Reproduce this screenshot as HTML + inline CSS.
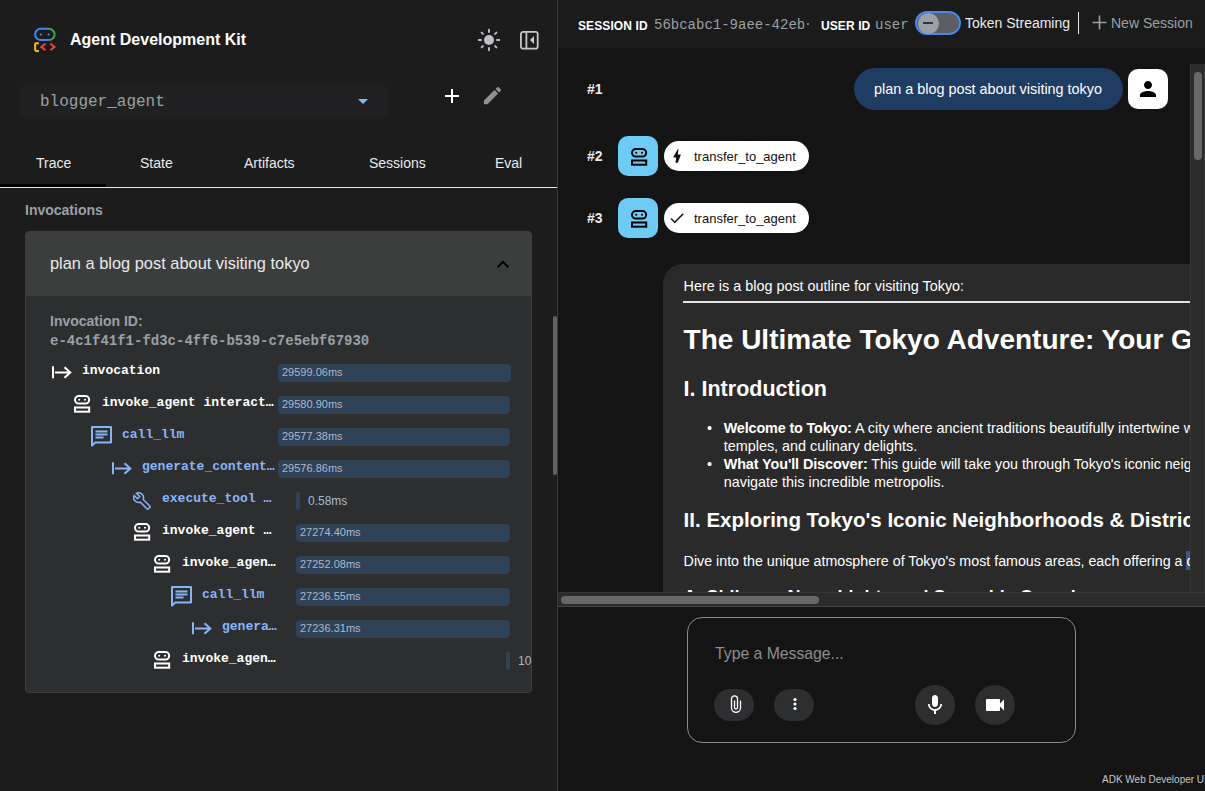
<!DOCTYPE html>
<html><head><meta charset="utf-8">
<style>
*{box-sizing:border-box;margin:0;padding:0}
html,body{width:1205px;height:791px;overflow:hidden;background:#141414;font-family:"Liberation Sans",sans-serif;color:#e8eaed}
.a{position:absolute}
.mono{font-family:"Liberation Mono",monospace}
#left{position:absolute;left:0;top:0;width:557px;height:791px;background:#1c1c1c}
#divider{position:absolute;left:557px;top:0;width:1px;height:791px;background:#3a3a3a}
#rhead{position:absolute;left:558px;top:0;width:647px;height:48px;background:#1b1b1b}
.tab{position:absolute;top:155px;font-size:14px;color:#e8eaed;white-space:nowrap}
.row{position:absolute;height:18px;white-space:nowrap}
.nm{position:absolute;font-family:"Liberation Mono",monospace;font-weight:bold;font-size:13px;white-space:nowrap;overflow:hidden;text-overflow:ellipsis}
.w{color:#ffffff}
.b{color:#8ab4f8}
.bar{position:absolute;height:18px;background:#304257;border-radius:4px;font-size:11px;color:#a9b9cc;line-height:17px;padding-left:4px;white-space:nowrap}
.ic{position:absolute}
</style></head><body>
<div id="left">
  <!-- logo -->
  <svg class="a" style="left:30px;top:24px" width="30" height="32" viewBox="0 0 30 32">
    <path d="M18 4.8 H19 A5.6 5.6 0 0 1 19 16 H18.6" fill="none" stroke="#34a853" stroke-width="2"/>
    <path d="M18.2 4.8 H10.7 A5.6 5.6 0 0 0 10.7 16 H18.8" fill="none" stroke="#4285f4" stroke-width="2"/>
    <circle cx="10.9" cy="10.6" r="1.1" fill="#4285f4"/>
    <circle cx="18.6" cy="10.6" r="1.1" fill="#4285f4"/>
    <path d="M8.9 19.2 H6.2 Q5.1 19.2 5.1 20.3 V25.8 Q5.1 26.9 6.2 26.9 H8.9" fill="none" stroke="#fbbc04" stroke-width="2"/>
    <path d="M15.4 19.6 L11.3 22.9 L15.4 26.2" fill="none" stroke="#ea4335" stroke-width="2"/>
    <path d="M20.4 19.6 L24.5 22.9 L20.4 26.2" fill="none" stroke="#ea4335" stroke-width="2"/>
  </svg>
  <div class="a" style="left:70px;top:31px;font-size:16px;font-weight:bold;color:#fff;white-space:nowrap">Agent Development Kit</div>
  <!-- sun -->
  <svg class="a" style="left:477.4px;top:28px" width="24" height="24" viewBox="0 0 24 24">
    <circle cx="12" cy="12" r="5" fill="#bdc1c6"/>
    <g stroke="#bdc1c6" stroke-width="1.9" stroke-linecap="round">
      <path d="M12 1.8v2.2M12 20v2.2M1.8 12h2.2M20 12h2.2M4.6 4.6l1.3 1.3M18.1 18.1l1.3 1.3M4.6 19.4l1.3-1.3M18.1 5.9l1.3-1.3"/>
    </g>
  </svg>
  <!-- panel icon -->
  <svg class="a" style="left:520px;top:31px" width="19" height="19" viewBox="0 0 19 19">
    <rect x="0.9" y="0.9" width="16.8" height="16.8" rx="2.2" fill="none" stroke="#c4c7c5" stroke-width="1.8"/>
    <path d="M6.4 1v16.6" stroke="#c4c7c5" stroke-width="1.8"/>
    <path d="M9.8 9 L14 5 V13 z" fill="#c4c7c5"/>
  </svg>
  <!-- agent select -->
  <div class="a" style="left:20px;top:84px;width:368px;height:35px;background:#202022;border-radius:8px"></div>
  <div class="a mono" style="left:40px;top:93px;font-size:16px;color:#9aa0a6;white-space:nowrap">blogger_agent</div>
  <svg class="a" style="left:357px;top:98px" width="12" height="8" viewBox="0 0 12 8"><path d="M1 1h10l-5 5z" fill="#8ab4f8"/></svg>
  <!-- plus -->
  <svg class="a" style="left:442px;top:86px" width="20" height="20" viewBox="0 0 20 20"><path d="M10 3v14M3 10h14" stroke="#fff" stroke-width="2"/></svg>
  <!-- pencil -->
  <svg class="a" style="left:480.5px;top:84px" width="23" height="23" viewBox="0 0 24 24"><path d="M3 17.25V21h3.75L17.81 9.94l-3.75-3.75L3 17.25zM20.71 7.04a1 1 0 0 0 0-1.41l-2.34-2.34a1 1 0 0 0-1.41 0l-1.83 1.83 3.75 3.75 1.83-1.83z" fill="#8f9193"/></svg>
  <!-- tabs -->
  <div class="tab" style="left:36px">Trace</div>
  <div class="tab" style="left:140px">State</div>
  <div class="tab" style="left:244px">Artifacts</div>
  <div class="tab" style="left:369px">Sessions</div>
  <div class="tab" style="left:495px">Eval</div>
  <div class="a" style="left:0;top:187px;width:557px;height:1px;background:#e8eaed"></div>
  <div class="a" style="left:0;top:184px;width:106px;height:3px;background:#000"></div>
  <div class="a" style="left:25px;top:202px;font-size:14px;font-weight:bold;color:#9aa0a6">Invocations</div>
  <!-- card -->
  <div class="a" style="left:25px;top:231px;width:507px;height:462px;background:#2d2e30;border:1px solid #3c3d3f;border-radius:4px;overflow:hidden">
    <div class="a" style="left:-1px;top:-1px;width:507px;height:65px;background:#3c3d3d"></div>
  </div>
  <div class="a" style="left:50px;top:254px;font-size:16.4px;color:#e8eaed;white-space:nowrap">plan a blog post about visiting tokyo</div>
  <svg class="a" style="left:495px;top:258px" width="16" height="12" viewBox="0 0 16 12"><path d="M2.6 9.2L8 3.8l5.4 5.4" fill="none" stroke="#000" stroke-width="2"/></svg>
  <div class="a" style="left:50px;top:313px;font-size:14px;font-weight:bold;color:#9aa0a6">Invocation ID:</div>
  <div class="a mono" style="left:50px;top:333px;font-size:14px;font-weight:bold;color:#9aa0a6;white-space:nowrap">e-4c1f41f1-fd3c-4ff6-b539-c7e5ebf67930</div>
  <!--ROWS-->
<svg class="ic" style="left:51px;top:366px" width="22" height="14" viewBox="0 0 22 14"><path d="M2 0.3v12" stroke="#ffffff" stroke-width="2"/><path d="M4 6.5h15.5M13.5 1.2l5.8 5.3-5.8 5.3" fill="none" stroke="#ffffff" stroke-width="2"/></svg>
<div class="nm" style="left:82px;top:360px;width:196px;line-height:22px;color:#ffffff">invocation</div>
<div class="bar" style="left:278px;top:364px;width:233px">29599.06ms</div>
<svg class="ic" style="left:74px;top:395px" width="17" height="18" viewBox="0 0 17 18"><rect x="1" y="1" width="14.2" height="7.6" rx="3.8" fill="none" stroke="#ffffff" stroke-width="2"/><circle cx="5.2" cy="4.8" r="1.05" fill="#ffffff"/><circle cx="11" cy="4.8" r="1.05" fill="#ffffff"/><rect x="1" y="12.5" width="14.2" height="4.2" fill="none" stroke="#ffffff" stroke-width="2"/></svg>
<div class="nm" style="left:102px;top:392px;width:176px;line-height:22px;color:#ffffff">invoke_agent interactive_blogger_agent</div>
<div class="bar" style="left:278px;top:396px;width:232px">29580.90ms</div>
<svg class="ic" style="left:91px;top:426px" width="21" height="21" viewBox="0 0 21 21"><path d="M1 19.5V1h19v15.5H4.2z" fill="none" stroke="#8ab4f8" stroke-width="2" stroke-linejoin="round"/><path d="M4.5 5.5h12M4.5 8.5h12M4.5 11.5h8" stroke="#8ab4f8" stroke-width="2"/></svg>
<div class="nm" style="left:122px;top:424px;width:156px;line-height:22px;color:#8ab4f8">call_llm</div>
<div class="bar" style="left:278px;top:428px;width:232px">29577.38ms</div>
<svg class="ic" style="left:111px;top:462px" width="22" height="14" viewBox="0 0 22 14"><path d="M2 0.3v12" stroke="#8ab4f8" stroke-width="2"/><path d="M4 6.5h15.5M13.5 1.2l5.8 5.3-5.8 5.3" fill="none" stroke="#8ab4f8" stroke-width="2"/></svg>
<div class="nm" style="left:142px;top:456px;width:136px;line-height:22px;color:#8ab4f8">generate_content gemini</div>
<div class="bar" style="left:278px;top:460px;width:232px">29576.86ms</div>
<svg class="ic" style="left:133px;top:491.5px" width="18" height="18" viewBox="0 0 24 24"><path d="M22.7 19l-9.1-9.1c.9-2.3.4-5-1.5-6.9-2-2-5-2.4-7.4-1.3L9 6 6 9 1.6 4.7C.4 7.1.9 10.1 2.9 12.1c1.9 1.9 4.6 2.4 6.9 1.5l9.1 9.1c.4.4 1 .4 1.4 0l2.300-2.300c.5-.4.5-1.100.1-1.400z" fill="none" stroke="#8ab4f8" stroke-width="2"/></svg>
<div class="nm" style="left:162px;top:488px;width:116px;line-height:22px;color:#8ab4f8">execute_tool transfer_to_agent</div>
<div class="bar" style="left:296px;top:492px;width:4px;padding:0"></div>
<div class="a" style="left:308px;top:492px;font-size:12px;line-height:18px;color:#a9b9cc;white-space:nowrap">0.58ms</div>
<svg class="ic" style="left:134px;top:523px" width="17" height="18" viewBox="0 0 17 18"><rect x="1" y="1" width="14.2" height="7.6" rx="3.8" fill="none" stroke="#ffffff" stroke-width="2"/><circle cx="5.2" cy="4.8" r="1.05" fill="#ffffff"/><circle cx="11" cy="4.8" r="1.05" fill="#ffffff"/><rect x="1" y="12.5" width="14.2" height="4.2" fill="none" stroke="#ffffff" stroke-width="2"/></svg>
<div class="nm" style="left:162px;top:520px;width:116px;line-height:22px;color:#ffffff">invoke_agent blogger</div>
<div class="bar" style="left:296px;top:524px;width:214px">27274.40ms</div>
<svg class="ic" style="left:154px;top:555px" width="17" height="18" viewBox="0 0 17 18"><rect x="1" y="1" width="14.2" height="7.6" rx="3.8" fill="none" stroke="#ffffff" stroke-width="2"/><circle cx="5.2" cy="4.8" r="1.05" fill="#ffffff"/><circle cx="11" cy="4.8" r="1.05" fill="#ffffff"/><rect x="1" y="12.5" width="14.2" height="4.2" fill="none" stroke="#ffffff" stroke-width="2"/></svg>
<div class="nm" style="left:182px;top:552px;width:96px;line-height:22px;color:#ffffff">invoke_agent planner</div>
<div class="bar" style="left:296px;top:556px;width:214px">27252.08ms</div>
<svg class="ic" style="left:171px;top:586px" width="21" height="21" viewBox="0 0 21 21"><path d="M1 19.5V1h19v15.5H4.2z" fill="none" stroke="#8ab4f8" stroke-width="2" stroke-linejoin="round"/><path d="M4.5 5.5h12M4.5 8.5h12M4.5 11.5h8" stroke="#8ab4f8" stroke-width="2"/></svg>
<div class="nm" style="left:202px;top:584px;width:76px;line-height:22px;color:#8ab4f8">call_llm</div>
<div class="bar" style="left:296px;top:588px;width:214px">27236.55ms</div>
<svg class="ic" style="left:191px;top:622px" width="22" height="14" viewBox="0 0 22 14"><path d="M2 0.3v12" stroke="#8ab4f8" stroke-width="2"/><path d="M4 6.5h15.5M13.5 1.2l5.8 5.3-5.8 5.3" fill="none" stroke="#8ab4f8" stroke-width="2"/></svg>
<div class="nm" style="left:222px;top:616px;width:56px;line-height:22px;color:#8ab4f8">generate_content gemini</div>
<div class="bar" style="left:296px;top:620px;width:214px">27236.31ms</div>
<svg class="ic" style="left:154px;top:651px" width="17" height="18" viewBox="0 0 17 18"><rect x="1" y="1" width="14.2" height="7.6" rx="3.8" fill="none" stroke="#ffffff" stroke-width="2"/><circle cx="5.2" cy="4.8" r="1.05" fill="#ffffff"/><circle cx="11" cy="4.8" r="1.05" fill="#ffffff"/><rect x="1" y="12.5" width="14.2" height="4.2" fill="none" stroke="#ffffff" stroke-width="2"/></svg>
<div class="nm" style="left:182px;top:648px;width:96px;line-height:22px;color:#ffffff">invoke_agent critic</div>
<div class="bar" style="left:506px;top:652px;width:4px;padding:0"></div>
<div class="a" style="left:518px;top:652px;font-size:12px;line-height:18px;color:#a9b9cc;white-space:nowrap">10</div>
<!--/ROWS-->
  <!-- scrollbar -->
  <div class="a" style="left:552.5px;top:316px;width:4.5px;height:159px;background:#5f6368;border-radius:2.5px"></div>
</div>
<div id="divider"></div>

<div id="rhead">
  <div class="a" style="left:20px;top:18.5px;font-size:12px;letter-spacing:0.1px;font-weight:bold;color:#fff;white-space:nowrap">SESSION ID</div>
  <div class="a mono" style="left:96px;top:17px;font-size:14px;color:#9aa0a6;white-space:nowrap">56bcabc1-9aee-42eb<span style="display:inline-block;width:2px;height:2px;border-radius:1px;background:#9aa0a6;position:relative;top:-4px;margin-left:2px"></span></div>
  <div class="a" style="left:263px;top:18.5px;font-size:12px;letter-spacing:0.1px;font-weight:bold;color:#fff;white-space:nowrap">USER ID</div>
  <div class="a mono" style="left:317px;top:16.5px;font-size:14px;color:#9aa0a6;white-space:nowrap">user</div>
  <div class="a" style="left:357px;top:11px;width:46px;height:24px;border:2px solid #4c84f2;border-radius:12px;background:#5b5e62"></div>
  <div class="a" style="left:359.5px;top:12.5px;width:21px;height:21px;border-radius:10.5px;background:#9aa0a6"></div>
  <div class="a" style="left:365px;top:22px;width:10px;height:2px;background:#333"></div>
  <div class="a" style="left:407px;top:15px;font-size:14px;color:#e8eaed;white-space:nowrap">Token Streaming</div>
  <div class="a" style="left:520px;top:12px;width:1.2px;height:22px;background:#e8eaed"></div>
  <svg class="a" style="left:534px;top:15px" width="15" height="15" viewBox="0 0 15 15"><path d="M7.5 0.5v14M0.5 7.5h14" stroke="#9aa0a6" stroke-width="1.6"/></svg>
  <div class="a" style="left:553px;top:15px;font-size:14px;color:#9aa0a6;white-space:nowrap">New Session</div>
</div>
<div id="chat" class="a" style="left:558px;top:48px;width:632px;height:544px;overflow:hidden;background:#141414">
  <div class="a" style="left:29px;top:33px;font-size:14px;font-weight:bold;color:#e8eaed">#1</div>
  <div class="a" style="left:296px;top:20px;width:269px;height:42px;border-radius:21px;background:#1f3d63"></div>
  <div class="a" style="left:316px;top:33px;font-size:14.4px;color:#fff;white-space:nowrap">plan a blog post about visiting tokyo</div>
  <div class="a" style="left:570px;top:21px;width:40px;height:40px;border-radius:10px;background:#fff"></div>
  <svg class="a" style="left:578px;top:29px" width="24" height="24" viewBox="0 0 24 24"><path d="M12 12c2.2 0 4-1.8 4-4s-1.8-4-4-4-4 1.8-4 4 1.8 4 4 4zm0 2c-2.7 0-8 1.3-8 4v2h16v-2c0-2.7-5.3-4-8-4z" fill="#000"/></svg>

  <div class="a" style="left:29px;top:100px;font-size:14px;font-weight:bold;color:#e8eaed">#2</div>
  <div class="a" style="left:60px;top:88px;width:40px;height:40px;border-radius:10px;background:#6ecbf5"></div><svg class="a" style="left:72.5px;top:100px" width="17" height="18" viewBox="0 0 17 18"><rect x="1" y="1" width="14.2" height="7.6" rx="3.8" fill="none" stroke="#000" stroke-width="2"/><circle cx="5.2" cy="4.8" r="1.05" fill="#000"/><circle cx="11" cy="4.8" r="1.05" fill="#000"/><rect x="1" y="12.5" width="14.2" height="4.2" fill="none" stroke="#000" stroke-width="2"/></svg>
  <div class="a" style="left:106px;top:93px;width:145px;height:30px;border-radius:15px;background:#fff"></div>
  <svg class="a" style="left:110px;top:99px" width="18" height="18" viewBox="0 0 24 24"><path d="M11 21h-1l1-7H7.5c-.6 0-.6-.3-.4-.6l.1-.1C8.5 11.1 10.4 7.8 13 3h1l-1 7h3.5c.5 0 .6.3.5.5L13 21z" fill="#111"/></svg>
  <div class="a" style="left:136px;top:101px;font-size:13px;color:#111;white-space:nowrap">transfer_to_agent</div>

  <div class="a" style="left:29px;top:162px;font-size:14px;font-weight:bold;color:#e8eaed">#3</div>
  <div class="a" style="left:60px;top:150px;width:40px;height:40px;border-radius:10px;background:#6ecbf5"></div><svg class="a" style="left:72.5px;top:162px" width="17" height="18" viewBox="0 0 17 18"><rect x="1" y="1" width="14.2" height="7.6" rx="3.8" fill="none" stroke="#000" stroke-width="2"/><circle cx="5.2" cy="4.8" r="1.05" fill="#000"/><circle cx="11" cy="4.8" r="1.05" fill="#000"/><rect x="1" y="12.5" width="14.2" height="4.2" fill="none" stroke="#000" stroke-width="2"/></svg>
  <div class="a" style="left:106px;top:155px;width:145px;height:30px;border-radius:15px;background:#fff"></div>
  <svg class="a" style="left:110px;top:161px" width="18" height="18" viewBox="0 0 24 24"><path d="M9 16.2L4.8 12l-1.4 1.4L9 19 21 7l-1.4-1.4L9 16.2z" fill="#111"/></svg>
  <div class="a" style="left:136px;top:163px;font-size:13px;color:#111;white-space:nowrap">transfer_to_agent</div>

  <div id="card" class="a" style="left:105px;top:216px;width:700px;height:400px;border-radius:20px;background:#2a2a2a;overflow:hidden">
    <div class="a" style="left:20.6px;top:15px;font-size:14.4px;line-height:1;color:#fff;white-space:nowrap">Here is a blog post outline for visiting Tokyo:</div>
    <div class="a" style="left:20px;top:37px;width:680px;height:2px;background:#e3e3e3"></div>
    <div class="a" style="left:20.6px;top:62px;font-size:28px;letter-spacing:0px;line-height:1;font-weight:bold;color:#fff;white-space:nowrap">The Ultimate Tokyo Adventure: Your Guide to the Capital</div>
    <div class="a" style="left:20.6px;top:114.8px;font-size:21.5px;line-height:1;font-weight:bold;color:#fff;white-space:nowrap">I. Introduction</div>
    <div class="a" style="left:44px;top:156.8px;font-size:14.4px;line-height:1;color:#fff;white-space:nowrap">&#8226;</div>
    <div class="a" style="left:60.7px;top:156.8px;font-size:14.4px;line-height:1;color:#fff;white-space:nowrap"><b style="letter-spacing:-0.15px">Welcome to Tokyo:</b> A city where ancient traditions beautifully intertwine with futuristic innovation.</div>
    <div class="a" style="left:60.7px;top:174.8px;font-size:14.4px;line-height:1;color:#fff;white-space:nowrap">temples, and culinary delights.</div>
    <div class="a" style="left:44px;top:192.8px;font-size:14.4px;line-height:1;color:#fff;white-space:nowrap">&#8226;</div>
    <div class="a" style="left:60.7px;top:192.8px;font-size:14.2px;line-height:1;color:#fff;white-space:nowrap"><b style="letter-spacing:-0.1px;font-size:14.4px">What You'll Discover:</b> This guide will take you through Tokyo's iconic neighborhoods,</div>
    <div class="a" style="left:60.7px;top:210.8px;font-size:14.4px;line-height:1;color:#fff;white-space:nowrap">navigate this incredible metropolis.</div>
    <div class="a" style="left:20.6px;top:246.2px;font-size:20.5px;line-height:1;font-weight:bold;color:#fff;white-space:nowrap">II. Exploring Tokyo's Iconic Neighborhoods &amp; Districts</div>
    <div class="a" style="left:522.8px;top:287px;width:10px;height:19px;background:#3c5a82"></div>
    <div class="a" style="left:20.6px;top:289.8px;font-size:14.25px;line-height:1;color:#fff;white-space:nowrap">Dive into the unique atmosphere of Tokyo's most famous areas, each offering a distinct vibe.</div>
    <div class="a" style="left:20.6px;top:324px;font-size:18px;line-height:1;font-weight:bold;color:#fff;white-space:nowrap">A. Shibuya: Neon Lights and Scramble Crossings</div>
  </div>
</div>


<!-- chat scrollbars -->
<div class="a" style="left:1190px;top:64px;width:15px;height:543px;background:#2b2b2b;border-left:1px solid #363636;border-right:1px solid #363636"></div>
<div class="a" style="left:1194px;top:72px;width:8px;height:88px;border-radius:4px;background:#686868"></div>
<div class="a" style="left:558px;top:592px;width:647px;height:15px;background:#2b2b2b;border-top:1px solid #363636;border-bottom:1px solid #444"></div>
<div class="a" style="left:561px;top:596px;width:258px;height:8px;border-radius:4px;background:#686868"></div>
<!-- input -->
<div class="a" style="left:687px;top:617px;width:389px;height:126px;border:1px solid #8a8a8a;border-radius:15px;background:#141414"></div>
<div class="a" style="left:715px;top:645px;font-size:15.75px;color:#8e8e8e;white-space:nowrap">Type a Message...</div>
<div class="a" style="left:714px;top:689px;width:40px;height:32px;border-radius:16px;background:#2d2e30"></div>
<svg class="a" style="left:730px;top:694px" width="12" height="20" viewBox="0 0 12 20"><path d="M10.5 6.5V13.8A4.5 4.5 0 0 1 1.5 13.8V4.8A3 3 0 0 1 7.5 4.8V13.5A1.5 1.5 0 0 1 4.5 13.5V6.5" fill="none" stroke="#fff" stroke-width="1.3"/></svg>
<div class="a" style="left:774px;top:689px;width:40px;height:32px;border-radius:16px;background:#2d2e30"></div>
<svg class="a" style="left:785.4px;top:694px" width="20" height="20" viewBox="0 0 20 20"><circle cx="10" cy="5.5" r="1.6" fill="#fff"/><circle cx="10" cy="10" r="1.6" fill="#fff"/><circle cx="10" cy="14.5" r="1.6" fill="#fff"/></svg>
<div class="a" style="left:915px;top:685px;width:40px;height:40px;border-radius:20px;background:#2d2e30"></div>
<svg class="a" style="left:923px;top:693px" width="24" height="24" viewBox="0 0 24 24"><path d="M12 14c1.66 0 3-1.34 3-3V5c0-1.66-1.34-3-3-3S9 3.34 9 5v6c0 1.66 1.34 3 3 3zm5.3-3c0 3-2.54 5.1-5.3 5.1S6.7 14 6.7 11H5c0 3.41 2.72 6.23 6 6.72V21h2v-3.28c3.28-.48 6-3.3 6-6.72h-1.7z" fill="#fff"/></svg>
<div class="a" style="left:975px;top:685px;width:40px;height:40px;border-radius:20px;background:#2d2e30"></div>
<svg class="a" style="left:983px;top:693px" width="24" height="24" viewBox="0 0 24 24"><path d="M17 10.5V7c0-.55-.45-1-1-1H4c-.55 0-1 .45-1 1v10c0 .55.45 1 1 1h12c.55 0 1-.45 1-1v-3.5l4 4v-11l-4 4z" fill="#fff"/></svg>
<div class="a" style="left:1102px;top:774.4px;font-size:10px;color:#c4c7c5;white-space:nowrap">ADK Web Developer UI</div>
</body></html>
